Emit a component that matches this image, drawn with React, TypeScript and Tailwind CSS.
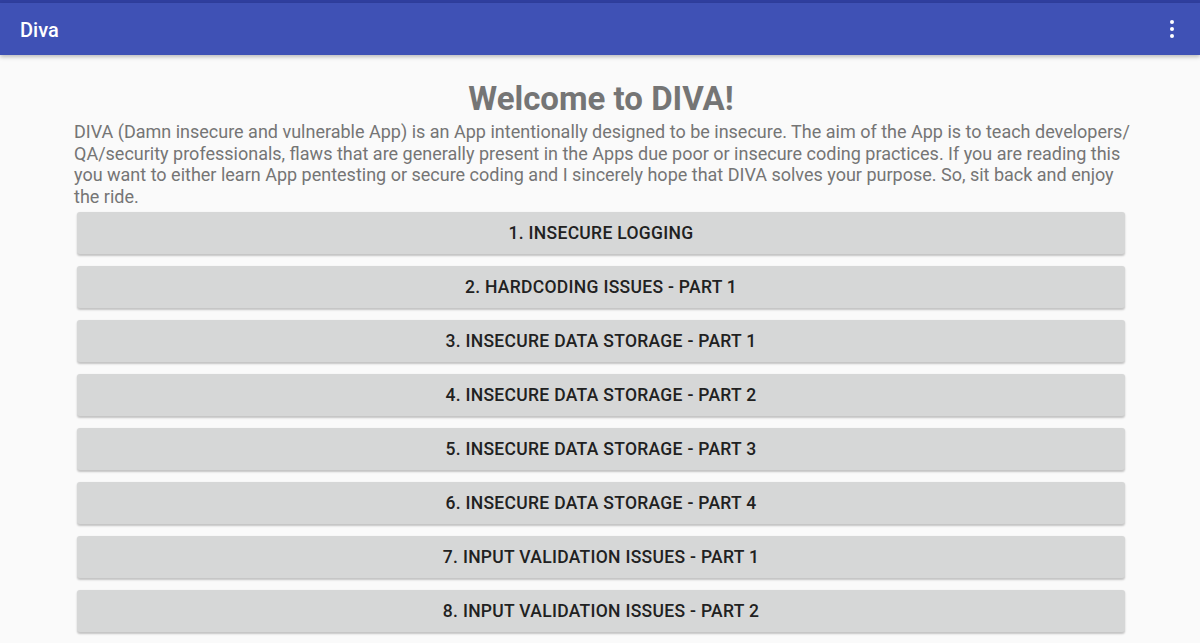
import React from 'react';

const ITEMS = [
  '1. INSECURE LOGGING',
  '2. HARDCODING ISSUES - PART 1',
  '3. INSECURE DATA STORAGE - PART 1',
  '4. INSECURE DATA STORAGE - PART 2',
  '5. INSECURE DATA STORAGE - PART 3',
  '6. INSECURE DATA STORAGE - PART 4',
  '7. INPUT VALIDATION ISSUES - PART 1',
  '8. INPUT VALIDATION ISSUES - PART 2',
];

export default function App() {
  return (
    <div
      className="h-[643px] w-[1200px] overflow-hidden bg-[#fafafa]"
      style={{ fontFamily: 'Roboto, "Noto Sans", sans-serif' }}
    >
      <div className="h-[3px] bg-[#303f9f]" />
      <header className="relative z-10 flex h-[52px] items-center justify-between bg-[#3f51b5] pl-[20px] pr-[26px] shadow-[0_2px_4px_rgba(0,0,0,0.25)]">
        <h1 className="pt-[1px] text-[20px] font-medium text-white">Diva</h1>
        <div className="flex flex-col gap-[3px]">
          <span className="h-[4px] w-[4px] rounded-full bg-white" />
          <span className="h-[4px] w-[4px] rounded-full bg-white" />
          <span className="h-[4px] w-[4px] rounded-full bg-white" />
        </div>
      </header>

      <main className="pl-[74px] pr-[72px] pt-[24px]">
        <h2 className="text-center text-[33px] font-bold leading-[40px] text-[#757575]">Welcome to DIVA!</h2>
        <p className="-mr-[8px] mt-[2px] text-[18px] leading-[21.5px] text-[#757575]">
          DIVA (Damn insecure and vulnerable App) is an App intentionally designed to be insecure. The aim of the App is to teach developers/<wbr />QA/security professionals, flaws that are generally present in the Apps due poor or insecure coding practices. If you are reading this you want to either learn App pentesting or secure coding and I sincerely hope that DIVA solves your purpose. So, sit back and enjoy the ride.
        </p>
        <div className="mt-[5px] flex flex-col gap-[12px] px-[3px]">
          {ITEMS.map((label) => (
            <button
              key={label}
              className="flex h-[42px] items-center justify-center rounded-[3px] bg-[#d6d7d7] text-[17.5px] font-medium tracking-[0.3px] text-[#212121] shadow-[0_1.5px_2px_rgba(0,0,0,0.22)]"
            >
              {label}
            </button>
          ))}
        </div>
      </main>
    </div>
  );
}
